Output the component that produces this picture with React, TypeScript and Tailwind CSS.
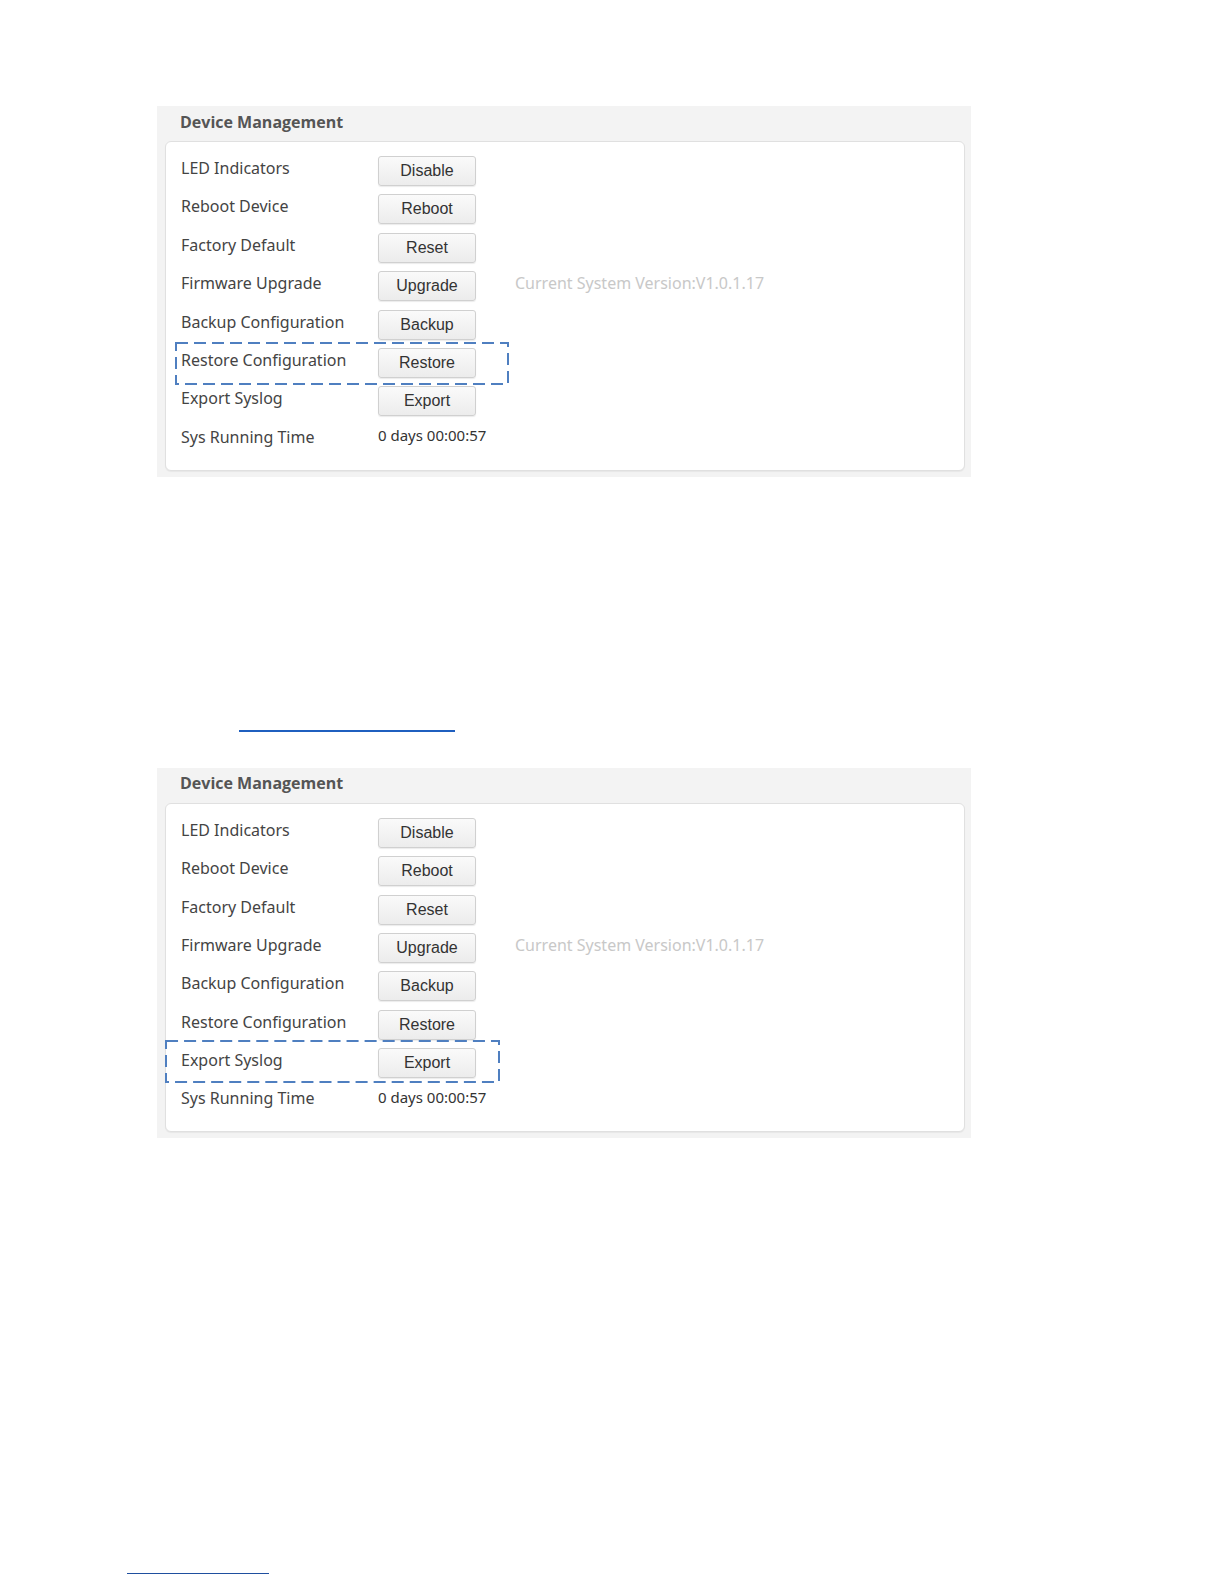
import React from 'react';

type Row = { label: string; button?: string; note?: string; value?: string };

const rows: Row[] = [
  { label: 'LED Indicators', button: 'Disable' },
  { label: 'Reboot Device', button: 'Reboot' },
  { label: 'Factory Default', button: 'Reset' },
  { label: 'Firmware Upgrade', button: 'Upgrade', note: 'Current System Version:V1.0.1.17' },
  { label: 'Backup Configuration', button: 'Backup' },
  { label: 'Restore Configuration', button: 'Restore' },
  { label: 'Export Syslog', button: 'Export' },
  { label: 'Sys Running Time', value: '0 days 00:00:57' },
];

// dashed callout drawn over a row
const DashedMark: React.FC<{ className: string }> = ({ className }) => (
  <svg className={`pointer-events-none absolute ${className}`} viewBox="0 0 334 43" preserveAspectRatio="none">
    <rect x="1" y="1" width="332" height="41" fill="none" stroke="#4f7fc0" strokeWidth="2" strokeDasharray="12 6" />
  </svg>
);

const Panel: React.FC<{ mark: 'restore' | 'export' }> = ({ mark }) => (
  <div className="relative ml-[157px] w-[814px] bg-[#f3f3f3] pb-[6px] pl-[8px] pr-[6px]">
    <div className="flex h-[35px] items-center pb-[4px] pl-[15px] text-[16px] font-bold text-[#555] [font-family:'Open_Sans','Noto_Sans',sans-serif]">
      Device Management
    </div>
    <div className="rounded-[6px] border border-[#e0e0e0] bg-white pb-[15px] pl-[15px] pt-[14px] shadow-[0_1px_1px_rgba(0,0,0,0.05)]">
      <div className="flex flex-col gap-[8.4px]">
        {rows.map((r) => (
          <div key={r.label} className="flex h-[30px] items-center">
            <div className="w-[197px] -translate-y-[3px] text-[16px] text-[#444] [font-family:'Noto_Sans','Open_Sans',sans-serif]">
              {r.label}
            </div>
            {r.button && (
              <button className="h-[30px] w-[98px] rounded-[3px] border border-[#d0d0d0] bg-gradient-to-b from-[#fafafa] to-[#ececec] text-[16px] text-[#333] shadow-[0_1px_1px_rgba(0,0,0,0.08)] [font-family:'Liberation_Sans',Arial,sans-serif]">
                {r.button}
              </button>
            )}
            {r.value && (
              <div className="-translate-y-[4px] text-[15px] text-[#333] [font-family:'Noto_Sans','Open_Sans',sans-serif]">
                {r.value}
              </div>
            )}
            {r.note && (
              <div className="ml-[39px] -translate-y-[3px] text-[16px] text-[#c8c8c8] [font-family:'Noto_Sans','Open_Sans',sans-serif]">
                {r.note}
              </div>
            )}
          </div>
        ))}
      </div>
    </div>
    {mark === 'restore' ? (
      <DashedMark className="left-[18px] top-[236px] h-[43px] w-[334px]" />
    ) : (
      <DashedMark className="left-[8px] top-[272px] h-[43px] w-[335px]" />
    )}
  </div>
);

export default function App() {
  return (
    <div className="h-[1584px] w-full overflow-hidden bg-white pt-[106px]">
      <Panel mark="restore" />
      <div className="ml-[239px] mt-[253px] h-[2px] w-[216px] bg-[#1f5fbf]" />
      <div className="mt-[36px]">
        <Panel mark="export" />
      </div>
      <div className="ml-[127px] mt-[435px] h-[1px] w-[142px] bg-[#1f4f9f]" />
    </div>
  );
}
